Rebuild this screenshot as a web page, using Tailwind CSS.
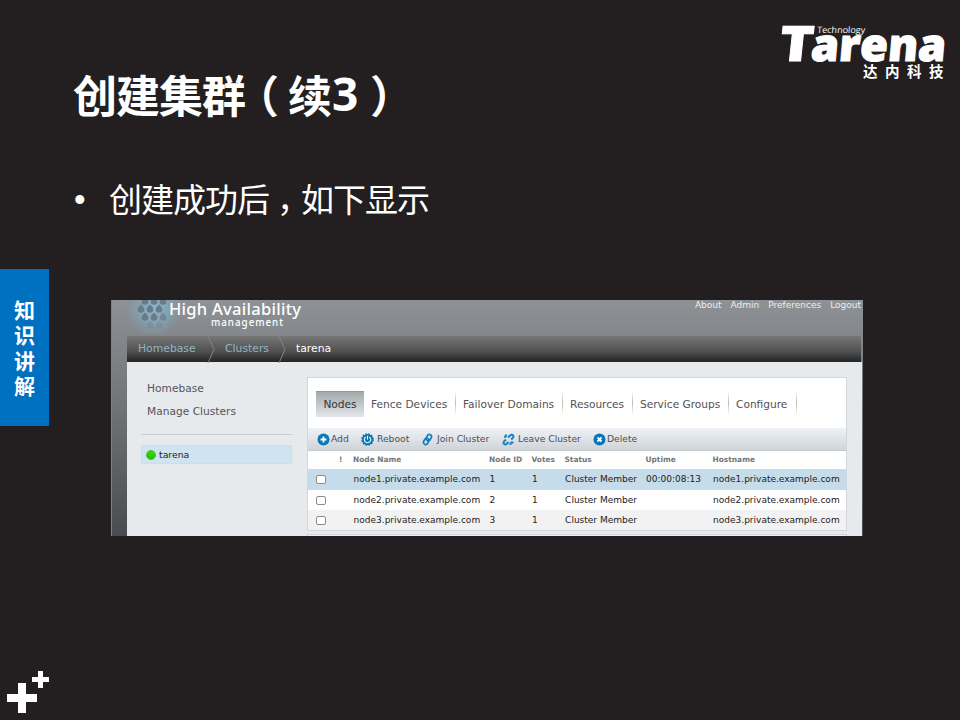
<!DOCTYPE html>
<html lang="zh-CN">
<head>
<meta charset="utf-8">
<title>创建集群</title>
<script src="https://cdn.jsdelivr.net/npm/@tailwindcss/browser@4"></script>
</head>
<body>
<main class="relative w-[960px] h-[720px] overflow-hidden bg-[#231f20] text-white font-['Open_Sans','Noto_Sans_CJK_SC',sans-serif]">
  <header class="flex h-[140px] justify-between">
    <h1 class="ml-[73px] mt-[62px] h-[64px] flex whitespace-nowrap text-[44px] tracking-[-1px] leading-[64px] font-bold font-['Noto_Sans_CJK_SC',sans-serif]"><span>创建集群</span><span class="relative -left-[10px]">（</span><span>续</span><span class="w-[25px] pl-px text-[46px] leading-[62px] font-['Open_Sans',sans-serif]">3</span><span class="relative left-[14px]">）</span></h1>
    <svg class="w-[190px] h-[75px] mt-[15px]" viewBox="770 15 190 75" fill="#fff">
      <text transform="translate(778 61) skewX(-6)" font-family="Open Sans" font-weight="800" font-size="49" stroke="#fff" stroke-width=".8" textLength="34" lengthAdjust="spacingAndGlyphs">T</text>
      <text transform="translate(810 61) skewX(-5)" font-family="Open Sans" font-weight="800" font-size="45" stroke="#fff" stroke-width="1.200" textLength="135" lengthAdjust="spacingAndGlyphs">arena</text>
      <text transform="translate(817 32.500) skewX(-4)" font-family="Open Sans" font-weight="500" font-size="8.800" textLength="48" lengthAdjust="spacingAndGlyphs">Technology</text>
      <text x="863 885 907 929" y="77" font-family="Noto Sans CJK SC" font-weight="700" font-size="14.500">达内科技</text>
    </svg>
  </header>
  <ul class="h-[129px] pt-[33px] pl-[74px]">
    <li class="flex h-[50px] leading-[50px] text-[33px] tracking-[-1px] font-['Noto_Sans_CJK_SC',sans-serif]"><span class="w-[35px] pt-[2px] font-['Liberation_Sans',sans-serif]">•</span><span>创建成功后</span><span class="relative left-[8px]">，</span><span>如下显示</span></li>
  </ul>
  <div class="flex">
    <aside class="w-[49px] h-[157px] bg-[#0070c0] flex flex-col items-center pt-[28px] text-[21px] leading-[25.3px] font-bold font-['Noto_Sans_CJK_SC',sans-serif]"><span>知</span><span>识</span><span>讲</span><span>解</span></aside>

    <section class="ml-[62px] mt-[31px] w-[752px] h-[236px] overflow-hidden bg-linear-to-b from-[#8e9296] via-[#707477] via-45% to-[#4a4b4e] border-l border-l-[#6785ad] font-['DejaVu_Sans',sans-serif]">
      <div class="flex h-[35px] justify-between">
        <svg class="w-[200px] h-[35px]" viewBox="112 300 200 35">
          <defs>
            <radialGradient id="glow"><stop offset="0" stop-color="#85b7d0"/><stop offset=".5" stop-color="#80abc0" stop-opacity=".7"/><stop offset="1" stop-color="#80a0b0" stop-opacity="0"/></radialGradient>
            <path id="drop" d="M0-4.500C1.500-2.800 3.300-1.600 3.300 .4A3.300 3.300 0 0 1-3.300 .4C-3.300-1.600-1.500-2.800 0-4.500Z"/>
          </defs>
          <circle cx="154" cy="309" r="28" fill="url(#glow)"/>
          <g fill="#6c7a85">
            <use href="#drop" x="145" y="301"/><use href="#drop" x="154" y="301"/><use href="#drop" x="163" y="301"/>
            <use href="#drop" x="141" y="309"/><use href="#drop" x="150" y="309"/><use href="#drop" x="159" y="309"/>
            <use href="#drop" x="145" y="317"/><use href="#drop" x="154" y="317"/><use href="#drop" x="163" y="317" opacity=".7"/>
            <use href="#drop" x="150" y="325" opacity=".35"/><use href="#drop" x="159" y="325" opacity=".3"/>
          </g>
          <text x="169" y="315" font-family="Noto Sans" font-weight="500" font-size="16.500" fill="#fff" textLength="132">High Availability</text>
          <text x="211" y="325.500" font-family="Noto Sans" font-weight="500" font-size="9.800" fill="#fff" textLength="72">management</text>
        </svg>
        <nav class="flex h-[11px] gap-[9px] pr-[2px] text-[9px] leading-[11px] text-[#eceef0]"><span>About</span><span>Admin</span><span>Preferences</span><span>Logout</span></nav>
      </div>
      <div class="ml-[15px] mr-[2px] h-[27px] flex items-center border-t border-t-[#858585] bg-linear-to-b from-[#777] via-[#505050] via-60% to-[#252424] text-[10.800px] leading-[14px] text-[#8fb3c7]">
        <span class="w-[80px] pl-[11px]">Homebase</span>
        <svg class="w-[8px] h-[27px]" viewBox="0 0 8 27" fill="none" stroke="#868686"><path d="M1 0L7 13.500L1 27"/></svg>
        <span class="w-[63px] pl-[10px]">Clusters</span>
        <svg class="w-[8px] h-[27px]" viewBox="0 0 8 27" fill="none" stroke="#868686"><path d="M1 0L7 13.500L1 27"/></svg>
        <span class="pl-[10px] text-white">tarena</span>
      </div>
      <div class="ml-[15px] mr-[1px] h-[174px] flex bg-[#e6eaed]">
        <div class="w-[180px] pl-[14px] text-[10.650px] text-[#555]">
          <div class="h-[73px] pt-[15px] pl-[6px] leading-[23px] border-b border-b-[#c9cdd0] w-[151px]"><div>Homebase</div><div>Manage Clusters</div></div>
          <div class="mt-[10px] w-[151px] h-[19px] flex items-center gap-[3px] pl-[4px] bg-[#d0e3f0] border border-[#c8e0ec] text-[9.300px] text-[#222]"><span class="w-[10px] h-[10px] rounded-full bg-linear-to-b from-[#40d80b] to-[#28b808] border border-[#46c020]"></span>tarena</div>
        </div>
        <div class="w-[540px] pt-[15px]">
          <div class="h-[154px] bg-white border border-[#d2d7db]">
            <div class="h-[50px] pt-[13px] pl-[8px] flex text-[10.600px] leading-[26px] text-[#505254]">
              <span class="w-[48px] h-[26px] leading-[24px] text-center bg-linear-to-b from-[#a3a8ab] to-[#e4e8eb] border-t border-t-[#929799] text-[#333]">Nodes</span>
              <span class="w-[91px] pl-[7px]">Fence Devices</span>
              <i class="w-px h-[24px] bg-linear-to-b from-white via-[#bbb] to-white"></i>
              <span class="w-[106px] pl-[7px]">Failover Domains</span>
              <i class="w-px h-[24px] bg-linear-to-b from-white via-[#bbb] to-white"></i>
              <span class="w-[69px] pl-[7px]">Resources</span>
              <i class="w-px h-[24px] bg-linear-to-b from-white via-[#bbb] to-white"></i>
              <span class="w-[95px] pl-[7px]">Service Groups</span>
              <i class="w-px h-[24px] bg-linear-to-b from-white via-[#bbb] to-white"></i>
              <span class="w-[67px] pl-[7px]">Configure</span>
              <i class="w-px h-[24px] bg-linear-to-b from-white via-[#bbb] to-white"></i>
            </div>
            <div class="h-[23px] pl-[9px] flex items-center border-b border-b-[#c5cacf] bg-linear-to-b from-[#eff3f8] to-[#cfd4d9] text-[9.200px] text-[#4b4f53]">
              <svg class="w-[13px] h-[13px]" viewBox="0 0 13 13"><circle cx="6.500" cy="6.500" r="6" fill="#0877b5"/><path d="M3.500 6.500h6M6.500 3.500v6" stroke="#fff" stroke-width="1.800"/></svg>
              <span class="w-[31px] pl-px">Add</span>
              <svg class="w-[13px] h-[13px]" viewBox="0 0 13 13"><circle cx="6.500" cy="6.500" r="5.500" fill="#0877b5" stroke="#0877b5" stroke-width="1.600" stroke-dasharray="1.730 1.150"/><path d="M4.600 4A3.200 3.200 0 1 0 8.400 4M6.500 2.800v3.600" fill="none" stroke="#e5f3fb" stroke-width="1.200"/></svg>
              <span class="w-[47px] pl-[3px]">Reboot</span>
              <svg class="w-[13px] h-[13px]" viewBox="0 0 13 13" fill="none" stroke="#137dbb" stroke-width="1.700"><rect x="5.600" y="1.300" width="4.400" height="6.600" rx="2.200" transform="rotate(28 7.800 4.600)"/><rect x="3" y="5" width="4.400" height="6.600" rx="2.200" transform="rotate(28 5.200 8.300)"/></svg>
              <span class="w-[68px] pl-[3px]">Join Cluster</span>
              <svg class="w-[13px] h-[13px]" viewBox="0 0 13 13" fill="none" stroke="#1b83bf" stroke-width="2"><path d="M6 4.500L8 2.600Q9.800 1 11 2.400Q12 3.600 10.700 5L9.200 6.500M6.500 9L4.700 11Q3.200 12 2 10.800Q1 9.500 2.200 8.300L4 6.500M2 3.800h2.500M4 1.500v2M8.500 9.500h3M8.500 9.500v2.500"/></svg>
              <span class="w-[78px] pl-[3px]">Leave Cluster</span>
              <svg class="w-[13px] h-[13px]" viewBox="0 0 13 13"><circle cx="6.500" cy="6.500" r="6" fill="#0877b5"/><path d="M4.500 4.500l4 4M8.500 4.500l-4 4" stroke="#fff" stroke-width="1.800"/></svg>
              <span class="pl-px">Delete</span>
            </div>
            <div class="grid grid-cols-[31px_14px_136px_42.5px_33px_81px_67px_1fr] h-[18px] items-center text-[7.450px] font-bold text-[#74777a]"><span></span><span>!</span><span>Node Name</span><span>Node ID</span><span>Votes</span><span>Status</span><span>Uptime</span><span>Hostname</span></div>
            <div class="grid grid-cols-[45.6px_136px_42.5px_33px_81px_67px_1fr] h-[21px] leading-[19px] items-center bg-[#c6dcea] text-[9px] text-[#222]"><i class="ml-[8px] w-[10px] h-[9px] rounded-[2px] border border-[#8d8b87] bg-white"></i><span>node1.private.example.com</span><span>1</span><span>1</span><span>Cluster Member</span><span>00:00:08:13</span><span>node1.private.example.com</span></div>
            <div class="grid grid-cols-[45.6px_136px_42.5px_33px_81px_67px_1fr] h-[20px] leading-[20px] items-center bg-white text-[9px] text-[#222]"><i class="ml-[8px] w-[10px] h-[9px] rounded-[2px] border border-[#8d8b87] bg-white"></i><span>node2.private.example.com</span><span>2</span><span>1</span><span>Cluster Member</span><span></span><span>node2.private.example.com</span></div>
            <div class="grid grid-cols-[45.6px_136px_42.5px_33px_81px_67px_1fr] h-[20px] leading-[20px] items-center bg-[#f2f2f2] text-[9px] text-[#222]"><i class="ml-[8px] w-[10px] h-[9px] rounded-[2px] border border-[#8d8b87] bg-white"></i><span>node3.private.example.com</span><span>3</span><span>1</span><span>Cluster Member</span><span></span><span>node3.private.example.com</span></div>
          </div>
          <div class="mt-[3px] h-[10px] border border-[#d2d7db] bg-[#eef1f3]"></div>
        </div>
      </div>
    </section>
  </div>
  <svg class="absolute left-0 top-[660px] w-[60px] h-[60px]" viewBox="0 0 60 60" fill="#fff"><path d="M18 23h8v11h11v8H26v11h-8V42H7v-8h11zM38 11h5v6h6v5h-6v6h-5v-6h-6v-5h6z"/></svg>
</main>
</body>
</html>
